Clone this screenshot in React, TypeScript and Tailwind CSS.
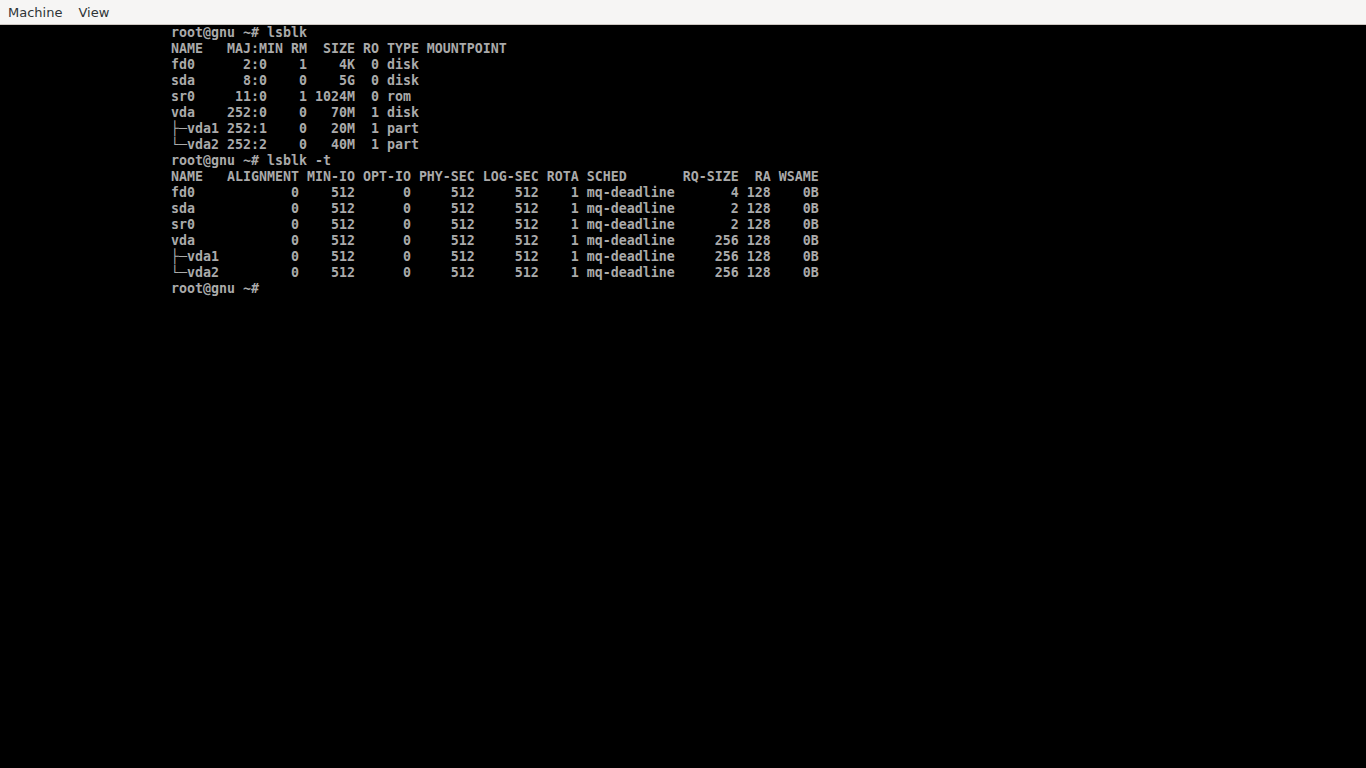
const lines = [
  "root@gnu ~# lsblk",
  "NAME   MAJ:MIN RM  SIZE RO TYPE MOUNTPOINT",
  "fd0      2:0    1    4K  0 disk",
  "sda      8:0    0    5G  0 disk",
  "sr0     11:0    1 1024M  0 rom",
  "vda    252:0    0   70M  1 disk",
  "├─vda1 252:1    0   20M  1 part",
  "└─vda2 252:2    0   40M  1 part",
  "root@gnu ~# lsblk -t",
  "NAME   ALIGNMENT MIN-IO OPT-IO PHY-SEC LOG-SEC ROTA SCHED       RQ-SIZE  RA WSAME",
  "fd0            0    512      0     512     512    1 mq-deadline       4 128    0B",
  "sda            0    512      0     512     512    1 mq-deadline       2 128    0B",
  "sr0            0    512      0     512     512    1 mq-deadline       2 128    0B",
  "vda            0    512      0     512     512    1 mq-deadline     256 128    0B",
  "├─vda1         0    512      0     512     512    1 mq-deadline     256 128    0B",
  "└─vda2         0    512      0     512     512    1 mq-deadline     256 128    0B",
  "root@gnu ~#",
];

export default function App() {
  return (
    <div className="w-[1366px] h-[768px] flex flex-col bg-black overflow-hidden">
      <div className="h-[25px] shrink-0 flex items-center gap-4 px-2 pt-px bg-[#f6f5f4] border-b border-[#cdc7c2] text-[13px] text-[#2e3436] font-['DejaVu_Sans',sans-serif]">
        <span>Machine</span>
        <span>View</span>
      </div>
      <div className="flex-1 flex justify-center">
        <pre className="w-[1024px] m-0 text-[13.29px] leading-4 font-bold text-[#aaaaaa] font-['DejaVu_Sans_Mono',monospace] whitespace-pre">
          {lines.join("\n")}
        </pre>
      </div>
    </div>
  );
}
